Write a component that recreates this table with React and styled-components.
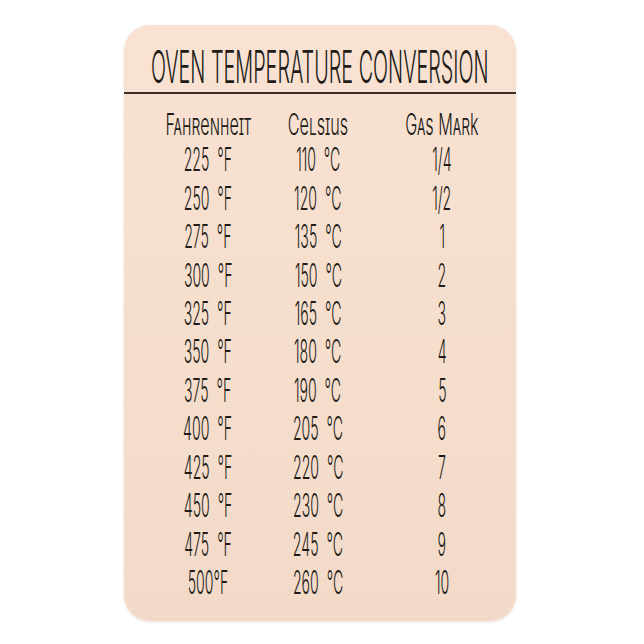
import React from 'react';
import styled, { createGlobalStyle } from 'styled-components';

const GlobalStyle = createGlobalStyle`
  html, body {
    margin: 0;
    padding: 0;
    background: #ffffff;
  }
  body {
    font-family: Inter, "Open Sans", sans-serif;
    color: #211b17;
  }
`;

const Page = styled.div`
  width: 644px;
  height: 644px;
  padding: 25px 0 0 124px;
  box-sizing: border-box;
  overflow: hidden;
`;

const Card = styled.div`
  width: 392px;
  height: 596px;
  border-radius: 26px;
  background: linear-gradient(180deg, #f9e2d2 0%, #f3dac8 100%);
  box-shadow: 0 1px 3px rgba(120, 90, 70, 0.18);
  display: flex;
  flex-direction: column;
`;

const Title = styled.div`
  padding-top: 19px;
  margin-bottom: 3px;
  height: 45px;
  font-size: 45px;
  line-height: 45px;
  font-weight: 270;
  display: flex;
  justify-content: center;
  white-space: nowrap;
`;

const Rule = styled.div`
  height: 1.5px;
  background: #3a2f28;
`;

const Table = styled.div`
  display: grid;
  grid-template-columns: 120px 100px 148px;
  padding-left: 24px;
  margin-top: 15.5px;
`;

const Head = styled.div`
  font-size: 30px;
  line-height: 30px;
  height: 30px;
  font-weight: 280;
  font-variant: small-caps;
  display: flex;
  justify-content: center;
  white-space: nowrap;
  margin-bottom: 2.3px;
`;

const Cell = styled.div`
  font-size: 32px;
  line-height: 38.45px;
  height: 38.45px;
  font-weight: 270;
  word-spacing: 9px;
  display: flex;
  justify-content: center;
  white-space: nowrap;
`;

const Squeeze = styled.span`
  display: inline-block;
  flex-shrink: 0;
  transform: scaleX(${p => p.$sx});
  transform-origin: center;
`;

const rows = [
  ['225 °F', '110 °C', '1/4'],
  ['250 °F', '120 °C', '1/2'],
  ['275 °F', '135 °C', '1'],
  ['300 °F', '150 °C', '2'],
  ['325 °F', '165 °C', '3'],
  ['350 °F', '180 °C', '4'],
  ['375 °F', '190 °C', '5'],
  ['400 °F', '205 °C', '6'],
  ['425 °F', '220 °C', '7'],
  ['450 °F', '230 °C', '8'],
  ['475 °F', '245 °C', '9'],
  ['500°F', '260 °C', '10'],
];

export default function App() {
  return (
    <>
      <GlobalStyle />
      <Page>
        <Card>
          <Title>
            <Squeeze $sx={0.44}>OVEN TEMPERATURE CONVERSION</Squeeze>
          </Title>
          <Rule />
          <Table>
            <Head><Squeeze $sx={0.54}>Fahrenheit</Squeeze></Head>
            <Head><Squeeze $sx={0.54}>Celsius</Squeeze></Head>
            <Head><Squeeze $sx={0.54}>Gas Mark</Squeeze></Head>
            {rows.map(r => r.map((t, i) => (
              <Cell key={r[0] + i}>
                <Squeeze $sx={0.44}>{t}</Squeeze>
              </Cell>
            )))}
          </Table>
        </Card>
      </Page>
    </>
  );
}
